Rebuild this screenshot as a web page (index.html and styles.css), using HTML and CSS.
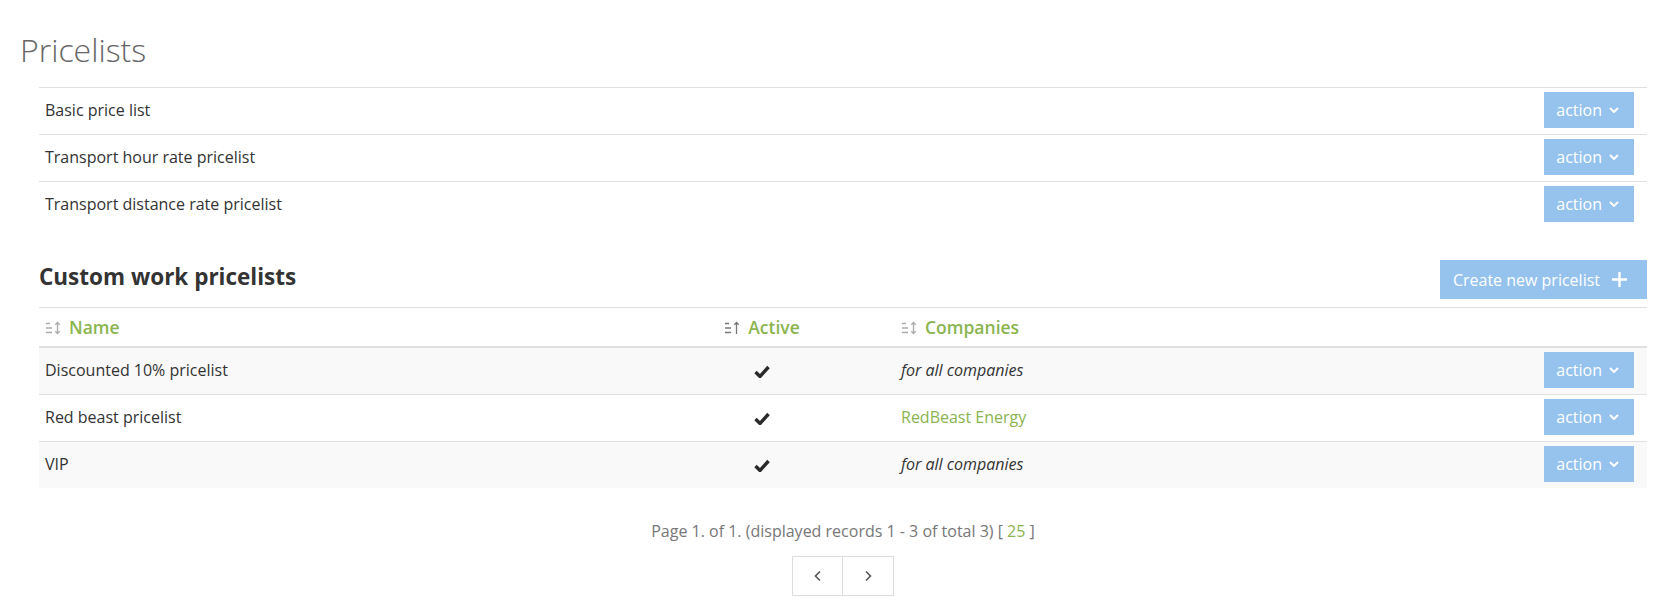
FILE: index.html
```html
<!DOCTYPE html>
<html lang="en">
<head>
    <meta charset="UTF-8">
    <meta name="viewport" content="width=device-width, initial-scale=1.0">
    <title>Pricelists</title>
    <link rel="stylesheet" href="styles.css">
</head>
<body>
    <h1 class="page-title">Pricelists</h1>

    <div class="content">
        <!-- Basic pricelists -->
        <table class="list-table">
            <colgroup>
                <col>
                <col class="col-action">
            </colgroup>
            <tbody>
                <tr>
                    <td>Basic price list</td>
                    <td class="cell-action"><button class="btn-action">action <svg class="chev" viewBox="0 0 10 6"><path d="M1 1l4 4 4-4"/></svg></button></td>
                </tr>
                <tr>
                    <td>Transport hour rate pricelist</td>
                    <td class="cell-action"><button class="btn-action">action <svg class="chev" viewBox="0 0 10 6"><path d="M1 1l4 4 4-4"/></svg></button></td>
                </tr>
                <tr>
                    <td>Transport distance rate pricelist</td>
                    <td class="cell-action"><button class="btn-action">action <svg class="chev" viewBox="0 0 10 6"><path d="M1 1l4 4 4-4"/></svg></button></td>
                </tr>
            </tbody>
        </table>

        <div class="section-head">
            <h2>Custom work pricelists</h2>
            <button class="btn-create">Create new pricelist <svg class="plus" viewBox="0 0 18 18"><path d="M9 1v16M1 9h16"/></svg></button>
        </div>

        <!-- Custom work pricelists -->
        <table class="list-table striped">
            <colgroup>
                <col class="col-name">
                <col class="col-active">
                <col>
                <col class="col-action">
            </colgroup>
            <thead>
                <tr>
                    <th><svg class="sort" viewBox="0 0 17 14"><path d="M1 2.5h4M1 7h6M1 11.5h6"/><path d="M12.5 1.5v11M10.3 3.7l2.2-2.2 2.2 2.2M10.3 10.3l2.2 2.2 2.2-2.2"/></svg>Name</th>
                    <th class="center"><svg class="sort on" viewBox="0 0 17 14"><path d="M1 2.5h4M1 7h6M1 11.5h6"/><path d="M12.5 1.5v11.5M10.3 3.7l2.2-2.2 2.2 2.2"/></svg>Active</th>
                    <th><svg class="sort" viewBox="0 0 17 14"><path d="M1 2.5h4M1 7h6M1 11.5h6"/><path d="M12.5 1.5v11M10.3 3.7l2.2-2.2 2.2 2.2M10.3 10.3l2.2 2.2 2.2-2.2"/></svg>Companies</th>
                    <th></th>
                </tr>
            </thead>
            <tbody>
                <tr>
                    <td>Discounted 10% pricelist</td>
                    <td class="center"><svg class="check" viewBox="0 0 16 13"><path d="M1.5 7l4.5 4.5 8.5-9.5"/></svg></td>
                    <td class="all">for all companies</td>
                    <td class="cell-action"><button class="btn-action">action <svg class="chev" viewBox="0 0 10 6"><path d="M1 1l4 4 4-4"/></svg></button></td>
                </tr>
                <tr>
                    <td>Red beast pricelist</td>
                    <td class="center"><svg class="check" viewBox="0 0 16 13"><path d="M1.5 7l4.5 4.5 8.5-9.5"/></svg></td>
                    <td><a href="#" class="link">RedBeast Energy</a></td>
                    <td class="cell-action"><button class="btn-action">action <svg class="chev" viewBox="0 0 10 6"><path d="M1 1l4 4 4-4"/></svg></button></td>
                </tr>
                <tr>
                    <td>VIP</td>
                    <td class="center"><svg class="check" viewBox="0 0 16 13"><path d="M1.5 7l4.5 4.5 8.5-9.5"/></svg></td>
                    <td class="all">for all companies</td>
                    <td class="cell-action"><button class="btn-action">action <svg class="chev" viewBox="0 0 10 6"><path d="M1 1l4 4 4-4"/></svg></button></td>
                </tr>
            </tbody>
        </table>

        <div class="pager-info">Page 1. of 1. (displayed records 1 - 3 of total 3) [ <a href="#" class="link">25</a> ]</div>
        <div class="pager">
            <button><svg viewBox="0 0 8 12"><path d="M6 1.5L1.5 6 6 10.5"/></svg></button>
            <button><svg viewBox="0 0 8 12"><path d="M2 1.5L6.5 6 2 10.5"/></svg></button>
        </div>
    </div>
</body>
</html>
```

FILE: styles.css
```css
* {
    box-sizing: border-box;
}

:root {
    --green: #8ab44f;
    --blue: #96c2ee;
    --line: #e0e0e0;
}

body {
    margin: 0;
    font-family: 'Open Sans', sans-serif;
    font-size: 16px;
    color: #333;
    background: white;
}

.page-title {
    margin: 28px 0 15px 20px;
    font-size: 32px;
    line-height: 44px;
    font-weight: 300;
    color: #666;
}

.content {
    padding: 0 17px 0 39px;
}

.list-table {
    width: 100%;
    border-collapse: collapse;
    table-layout: fixed;
}

.col-name {
    width: 590px;
}

.col-active {
    width: 266px;
}

.col-action {
    width: 120px;
}

.list-table td {
    padding: 4px 6px 6px;
    border-top: 1px solid var(--line);
    vertical-align: middle;
    line-height: 22px;
}

.list-table th {
    padding: 8px 6px;
    text-align: left;
    font-size: 17.5px;
    font-weight: 600;
    color: var(--green);
    line-height: 22px;
    border-top: 1px solid var(--line);
    border-bottom: 2px solid var(--line);
}

.list-table thead + tbody tr:first-child td {
    border-top: none;
}

.striped tbody tr:nth-child(odd) {
    background: #f9f9f9;
}

.list-table .center {
    text-align: center;
}

.cell-action {
    text-align: right;
    padding-right: 13px !important;
}

.btn-action {
    display: inline-flex;
    align-items: center;
    gap: 7px;
    height: 36px;
    padding: 0 15px 0 12px;
    border: none;
    background: var(--blue);
    color: white;
    font-family: inherit;
    font-size: 16px;
    vertical-align: middle;
}

.chev {
    width: 10px;
    height: 6px;
    fill: none;
    stroke: white;
    stroke-width: 2;
}

.sort {
    width: 17px;
    height: 14px;
    margin-right: 7px;
    fill: none;
    stroke: #aaa;
    stroke-width: 1.3;
    vertical-align: -1px;
}

.sort.on {
    stroke: #777;
}

.check {
    width: 16px;
    height: 13px;
    fill: none;
    stroke: #2a2a2a;
    stroke-width: 3.4;
    vertical-align: middle;
}

.all {
    font-style: italic;
}

.link {
    color: var(--green);
    text-decoration: none;
}

.section-head {
    display: flex;
    justify-content: space-between;
    align-items: center;
    margin: 32px 0 8px;
}

.section-head h2 {
    margin: 0 0 6px;
    font-size: 22.5px;
    font-weight: 700;
    color: #333;
}

.btn-create {
    display: inline-flex;
    align-items: center;
    gap: 11px;
    height: 39px;
    padding: 0 19px 0 13px;
    border: none;
    background: var(--blue);
    color: white;
    font-family: inherit;
    font-size: 16px;
}

.plus {
    width: 17px;
    height: 17px;
    fill: none;
    stroke: white;
    stroke-width: 2.5;
}

.pager-info {
    margin-top: 32px;
    text-align: center;
    color: #777;
    line-height: 22px;
}

.pager {
    display: flex;
    justify-content: center;
    margin-top: 14px;
}

.pager button {
    width: 51px;
    height: 40px;
    border: 1px solid #ddd;
    background: white;
    display: flex;
    align-items: center;
    justify-content: center;
}

.pager button + button {
    border-left: none;
}

.pager svg {
    width: 8px;
    height: 12px;
    fill: none;
    stroke: #555;
    stroke-width: 1.6;
}
```
